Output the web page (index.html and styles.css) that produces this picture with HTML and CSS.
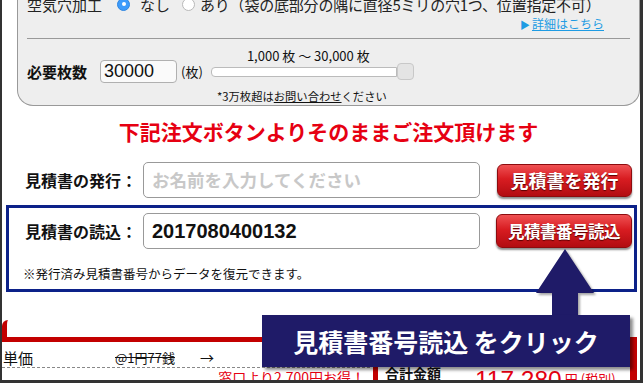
FILE: index.html
```html
<!DOCTYPE html>
<html lang="ja">
  <head>
    <meta charset="UTF-8" />
    <meta name="viewport" content="width=device-width, initial-scale=1.0" />
    <title>見積書の発行・読込</title>
    <link rel="stylesheet" href="styles.css">
  </head>
  <body>
    <div class="frame">
      <div class="spec">
        <div class="spec-row">
          <span class="spec-label">空気穴加工</span>
          <span class="radio checked"></span><span class="radio-text">なし</span>
          <span class="radio"></span><span class="radio-text second">あり（袋の底部分の隅に直径5ミリの穴1つ、位置指定不可）</span>
        </div>
        <div class="spec-link"><span class="tri">&#9654;</span><a href="#">詳細はこちら</a></div>
        <div class="spec-rule"></div>
        <div class="spec-qty">
          <span class="qty-label">必要枚数</span>
          <input type="text" class="qty-input" value="30000" />
          <span class="qty-unit">(枚)</span>
          <div class="range">
            <div class="range-caption">1,000 枚 〜 30,000 枚</div>
            <div class="range-bar"><span class="range-track"></span><span class="range-thumb"></span></div>
          </div>
        </div>
        <p class="qty-note">*3万枚超は<a href="#">お問い合わせ</a>ください</p>
      </div>

      <p class="lead">下記注文ボタンよりそのままご注文頂けます</p>

      <div class="quote-row issue">
        <label class="quote-label">見積書の発行：</label>
        <input type="text" class="quote-input" placeholder="お名前を入力してください" />
        <button type="button" class="red-btn">見積書を発行</button>
      </div>

      <div class="load-box">
        <div class="quote-row">
          <label class="quote-label">見積書の読込：</label>
          <input type="text" class="quote-input" value="2017080400132" />
          <button type="button" class="red-btn narrow">見積書番号読込</button>
        </div>
        <p class="load-note">※発行済み見積書番号からデータを復元できます。</p>
      </div>

      <div class="order-tab"></div>
      <div class="order">
        <div class="price-list">
          <div class="price-row">
            <span class="price-name">単価</span>
            <s class="price-old">@1円77銭</s>
            <span class="price-arrow">→</span>
          </div>
          <p class="price-save">窓口より2,700円お得！</p>
        </div>
        <div class="total">
          <span class="total-label">合計金額</span>
          <span class="total-value">117,280</span>
          <span class="total-yen">円</span>
          <span class="total-tax">(税別)</span>
        </div>
      </div>

      <svg class="arrow" width="72" height="75" viewBox="0 0 72 75">
        <path d="M35 4 L64 48 L48 48 L48 75 L22 75 L22 48 L6 48 Z" fill="#1f1b68" />
      </svg>
      <div class="callout">見積書番号読込 をクリック</div>
    </div>
  </body>
</html>
```

FILE: styles.css
```css
body {
  margin: 0;
  font-family: "Noto Sans CJK JP", "Liberation Sans", sans-serif;
  color: #111;
  background-color: #fff;
}
.frame {
  position: relative;
  height: 383px;
  box-sizing: border-box;
  border-left: 2px solid #333;
  border-right: 3px solid #333;
  border-bottom: 3px solid #333;
  overflow: hidden;
}
.spec {
  margin: -16px 0 0 15px;
  padding: 10px 9px 2px 9px;
  background-color: #eee;
  border: 1px solid #999;
  border-top: none;
  border-radius: 0 0 16px 16px;
}
.spec-row {
  display: flex;
  align-items: center;
  height: 20px;
  font-size: 15px;
  color: #222;
  white-space: nowrap;
}
.spec-label {
  width: 73px;
}
.radio {
  display: inline-block;
  width: 13px;
  height: 13px;
  margin-left: 17px;
  box-sizing: border-box;
  border: 1px solid #b8b8b8;
  border-radius: 50%;
  background-color: #fff;
  position: relative;
}
.radio.checked {
  background-color: #3d9bfb;
  border-color: #2f86e0;
}
.radio.checked::after {
  content: "";
  position: absolute;
  left: 3.5px;
  top: 3.5px;
  width: 4px;
  height: 4px;
  border-radius: 50%;
  background-color: #fff;
}
.radio-text {
  margin-left: 10px;
}
.radio-text.second {
  margin-left: 5px;
  letter-spacing: -0.2px;
}
.radio + .radio-text + .radio {
  margin-left: 12px;
}
.spec-link {
  height: 16px;
  margin-top: 2px;
  padding-right: 26px;
  text-align: right;
  font-size: 12px;
  line-height: 16px;
}
.spec-link a,
.tri {
  color: #1d9be3;
}
.tri {
  font-size: 10px;
  margin-right: 2px;
}
.spec-rule {
  margin-top: 6px;
  border-top: 1px solid #999;
}
.spec-qty {
  display: flex;
  align-items: flex-end;
  margin-top: 10px;
}
.qty-label {
  width: 73px;
  font-size: 15px;
  font-weight: bold;
  line-height: 23px;
}
.qty-input {
  width: 77px;
  height: 23px;
  box-sizing: border-box;
  margin: 0;
  padding: 0 3px;
  border: 1px solid #b0b0b0;
  border-radius: 4px;
  background-color: #fafafa;
  font-family: "Liberation Sans", sans-serif;
  font-size: 18px;
  color: #111;
}
.qty-unit {
  margin-left: 4px;
  font-size: 13px;
  line-height: 23px;
}
.range {
  width: 203px;
  margin: 0 0 3px 8px;
}
.range-caption {
  padding-right: 8px;
  text-align: center;
  font-size: 13px;
  line-height: 14px;
}
.range-bar {
  display: flex;
  align-items: center;
  height: 17px;
}
.range-track {
  flex: 1;
  height: 10px;
  box-sizing: border-box;
  border: 1px solid #bbb;
  border-radius: 4px 0 0 4px;
  background-color: #fff;
}
.range-thumb {
  width: 17px;
  height: 17px;
  box-sizing: border-box;
  border: 1px solid #c8c8c8;
  border-radius: 4px;
  background-color: #e4e4e4;
}
.qty-note {
  margin: 6px 0 0 190px;
  font-size: 11.3px;
  line-height: 14px;
}
.qty-note a {
  color: inherit;
}
.lead {
  margin: 12px 0 0;
  padding-left: 15px;
  text-align: center;
  color: #e60012;
  font-size: 21px;
  font-weight: bold;
  line-height: 26px;
}
.quote-row {
  display: flex;
  align-items: center;
  padding-left: 23px;
}
.quote-row.issue {
  margin-top: 18px;
}
.quote-label {
  width: 118px;
  font-size: 16px;
  font-weight: bold;
}
.quote-input {
  width: 337px;
  height: 36px;
  box-sizing: border-box;
  margin: 0;
  padding: 0 8px;
  border: 1px solid #999;
  border-radius: 5px;
  background-color: #fff;
  font-family: "Liberation Sans", "Noto Sans CJK JP", sans-serif;
  font-size: 20px;
  font-weight: bold;
  color: #111;
}
.quote-input::placeholder {
  font-family: "Noto Sans CJK JP", sans-serif;
  font-size: 17.5px;
  color: #c8c8c8;
}
.red-btn {
  width: 135px;
  height: 33px;
  margin-left: 17px;
  padding: 0;
  border: 1px solid #8d0b0e;
  border-radius: 6px;
  background: linear-gradient(#ef5153, #d81c21 45%, #b20c11);
  box-shadow: 0 2px 2px rgba(0, 0, 0, 0.45);
  color: #fff;
  font-family: inherit;
  font-size: 18px;
  font-weight: bold;
  text-shadow: 0 1px 1px #5a0000;
  cursor: pointer;
}
.red-btn.narrow {
  width: 136px;
  height: 34px;
  margin-left: 16px;
  font-size: 16.5px;
  letter-spacing: -0.5px;
}
.load-box {
  margin: 7px 3px 0 4px;
  padding: 5px 0 7px;
  border: 3px solid #0c2189;
}
.load-box .quote-row {
  padding-left: 16px;
}
.load-note {
  margin: 17px 0 0 14px;
  font-size: 12.5px;
  line-height: 16px;
}
.order-tab {
  height: 17px;
  margin: 28px 3px 0 0;
  border-left: 5px solid #c30000;
  border-bottom: 5px solid #c30000;
  border-top-left-radius: 6px;
}
.order {
  display: flex;
  height: 38px;
}
.price-list {
  width: 368px;
}
.price-row {
  display: flex;
  align-items: center;
  height: 20px;
  margin-top: 5px;
  padding-left: 1px;
  border-bottom: 1px dashed #888;
  font-size: 14px;
}
.price-name {
  width: 112px;
  font-size: 15px;
}
.price-old {
  width: 85px;
  font-size: 13px;
}
.price-save {
  margin: 1px 0 0;
  padding-right: 5px;
  text-align: right;
  color: #e60012;
  font-size: 14px;
  line-height: 16px;
}
.total {
  flex: 1;
  display: flex;
  align-items: flex-start;
  margin: 0 3px;
  padding-left: 7px;
  border-left: 5px solid #c30000;
  border-right: 7px solid #c30000;
}
.total-label {
  margin-top: 23px;
  font-size: 14px;
  font-weight: bold;
  line-height: 16px;
}
.total-value {
  margin: 25px 0 0 34px;
  color: #e60012;
  font-family: "Liberation Sans", sans-serif;
  font-size: 24.5px;
  line-height: 26px;
}
.total-yen,
.total-tax {
  margin: 29px 0 0 3px;
  color: #e60012;
  font-size: 13px;
  line-height: 16px;
}
.arrow {
  position: absolute;
  left: 528px;
  top: 245px;
  filter: drop-shadow(2px 2px 1px rgba(0, 0, 0, 0.35));
}
.callout {
  position: absolute;
  left: 260px;
  top: 315px;
  width: 368px;
  height: 52px;
  background-color: #1f1b68;
  box-shadow: 3px 3px 3px rgba(0, 0, 0, 0.45);
  color: #fff;
  font-size: 25px;
  font-weight: bold;
  line-height: 52px;
  text-align: center;
}
```
